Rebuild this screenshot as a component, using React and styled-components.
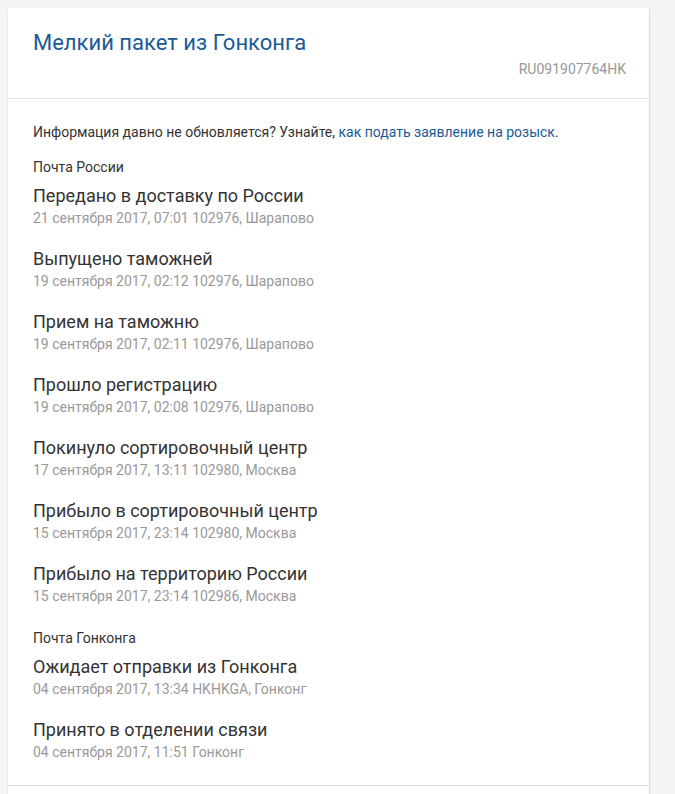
import React from "react";
import styled, { createGlobalStyle } from "styled-components";

const Global = createGlobalStyle`
  html, body { margin: 0; padding: 0; background: #f5f5f5; }
  body { padding: 8px; font-family: Roboto, "Noto Sans", Arial, sans-serif; }
`;

const Card = styled.div`
  width: 641px;
  background: #fff;
  box-shadow: 0 1px 2px rgba(0, 0, 0, 0.12), 1px 0 1px rgba(0, 0, 0, 0.06);
`;

const Header = styled.div`
  padding: 22px 23px 20px 25px;
  border-bottom: 1px solid #e3e3e3;
  display: flex;
  flex-direction: column;
`;

const Title = styled.h1`
  margin: 0;
  font-size: 22px;
  line-height: 25px;
  font-weight: 400;
  color: #1b5a98;
`;

const Barcode = styled.div`
  align-self: flex-end;
  margin-top: 5px;
  font-size: 14px;
  line-height: 18px;
  color: #999;
`;

const Body = styled.div`
  padding: 24px 25px 22px 25px;
  border-bottom: 1px solid #e3e3e3;
  display: flex;
  flex-direction: column;
  gap: 17px;
`;

const Info = styled.p`
  margin: 0;
  font-size: 14px;
  line-height: 18px;
  color: #333;
`;

const Link = styled.a`
  color: #1b5a98;
  text-decoration: none;
`;

const Group = styled.section`
  display: flex;
  flex-direction: column;
  gap: 19px;
  & + & {
    margin-top: 5px;
  }
`;

const GroupLabel = styled.div`
  font-size: 14px;
  line-height: 18px;
  color: #333;
  margin-bottom: -10px;
`;

const Item = styled.div`
  display: flex;
  flex-direction: column;
`;

const Status = styled.div`
  font-size: 18px;
  line-height: 22px;
  color: #333;
`;

const Meta = styled.div`
  font-size: 14px;
  line-height: 22px;
  color: #999;
`;

const Footer = styled.div`
  height: 40px;
`;

const groups = [
  {
    name: "Почта России",
    items: [
      ["Передано в доставку по России", "21 сентября 2017, 07:01 102976, Шарапово"],
      ["Выпущено таможней", "19 сентября 2017, 02:12 102976, Шарапово"],
      ["Прием на таможню", "19 сентября 2017, 02:11 102976, Шарапово"],
      ["Прошло регистрацию", "19 сентября 2017, 02:08 102976, Шарапово"],
      ["Покинуло сортировочный центр", "17 сентября 2017, 13:11 102980, Москва"],
      ["Прибыло в сортировочный центр", "15 сентября 2017, 23:14 102980, Москва"],
      ["Прибыло на территорию России", "15 сентября 2017, 23:14 102986, Москва"],
    ],
  },
  {
    name: "Почта Гонконга",
    items: [
      ["Ожидает отправки из Гонконга", "04 сентября 2017, 13:34 HKHKGA, Гонконг"],
      ["Принято в отделении связи", "04 сентября 2017, 11:51 Гонконг"],
    ],
  },
];

export default function App() {
  return (
    <>
      <Global />
      <Card>
        <Header>
          <Title>Мелкий пакет из Гонконга</Title>
          <Barcode>RU091907764HK</Barcode>
        </Header>
        <Body>
          <Info>
            Информация давно не обновляется? Узнайте,{" "}
            <Link href="#">как подать заявление на розыск</Link>.
          </Info>
          {groups.map((g) => (
            <Group key={g.name}>
              <GroupLabel>{g.name}</GroupLabel>
              {g.items.map(([s, m]) => (
                <Item key={s}>
                  <Status>{s}</Status>
                  <Meta>{m}</Meta>
                </Item>
              ))}
            </Group>
          ))}
        </Body>
        <Footer />
      </Card>
    </>
  );
}
